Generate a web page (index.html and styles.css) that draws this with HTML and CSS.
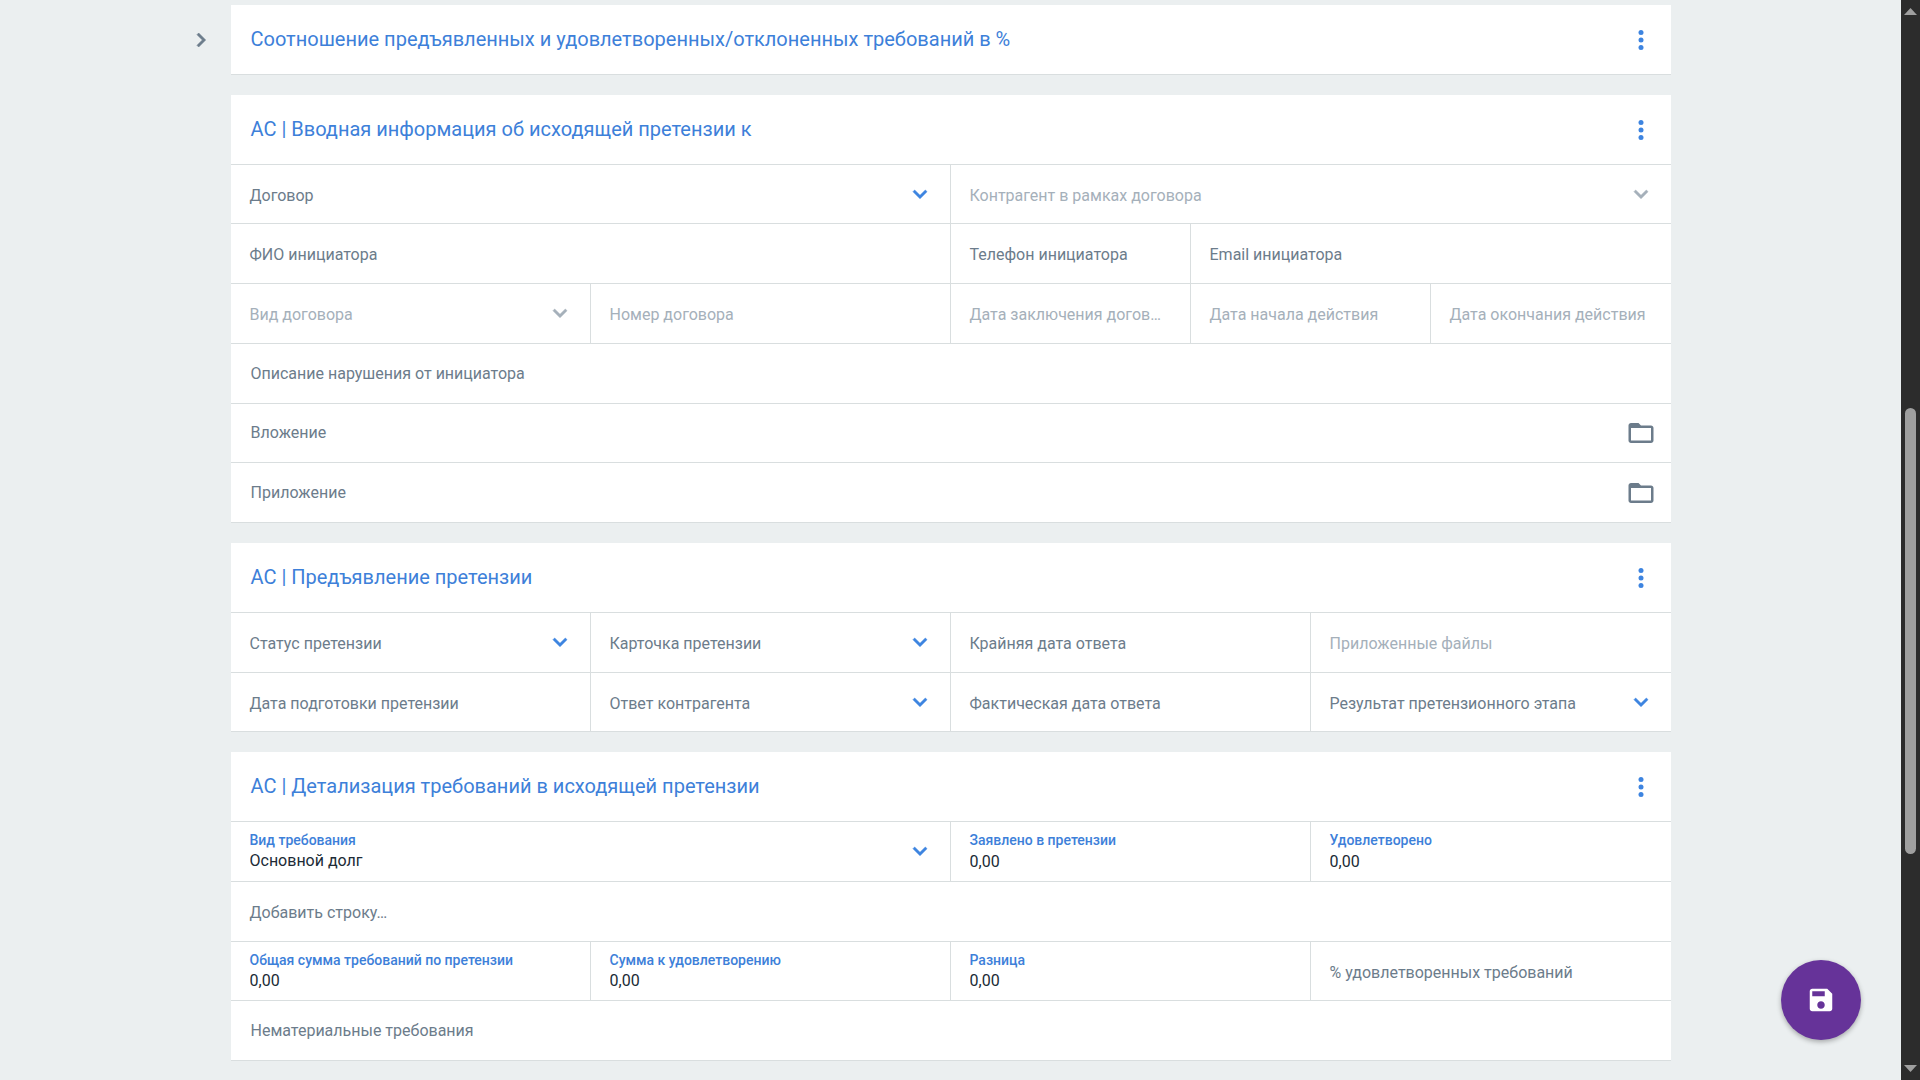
FILE: index.html
```html
<!DOCTYPE html>
<html lang="ru">
<head>
    <meta charset="UTF-8">
    <meta name="viewport" content="width=device-width, initial-scale=1.0">
    <title>Исходящая претензия</title>
    <link rel="stylesheet" href="styles.css">
</head>
<body>
    <svg class="sprite" aria-hidden="true">
        <symbol id="dots" viewBox="0 0 24 24"><circle cx="12" cy="6" r="2"/><circle cx="12" cy="12" r="2"/><circle cx="12" cy="18" r="2"/></symbol>
        <symbol id="chevron" viewBox="0 0 24 24"><path d="M16.59 8.59L12 13.17 7.41 8.59 6 10l6 6 6-6z"/></symbol>
        <symbol id="chevron-right" viewBox="0 0 24 24"><path d="M10 6L8.59 7.41 13.17 12l-4.58 4.59L10 18l6-6z"/></symbol>
        <symbol id="folder" viewBox="0 0 24 24"><path d="M20 6h-8l-2-2H4c-1.1 0-2 .9-2 2v12c0 1.1.9 2 2 2h16c1.1 0 2-.9 2-2V8c0-1.1-.9-2-2-2zm0 12H4V8h16v10z"/></symbol>
        <symbol id="save" viewBox="0 0 24 24"><path d="M17 3H5c-1.11 0-2 .9-2 2v14c0 1.1.89 2 2 2h14c1.1 0 2-.9 2-2V7l-4-4zm-5 16c-1.66 0-3-1.34-3-3s1.34-3 3-3 3 1.34 3 3-1.34 3-3 3zm3-10H5V5h10v4z"/></symbol>
    </svg>

    <div class="page">
        <button class="icon-button side-toggle" type="button" aria-label="Открыть панель"><svg class="icon"><use href="#chevron-right"/></svg></button>

        <main class="content">
            <section class="card">
                <header class="card-header">
                    <h2>Соотношение предъявленных и удовлетворенных/отклоненных требований в %</h2>
                    <button class="icon-button menu" type="button" aria-label="Меню"><svg class="icon icon-large"><use href="#dots"/></svg></button>
                </header>
            </section>

            <section class="card">
                <header class="card-header">
                    <h2>АС | Вводная информация об исходящей претензии к</h2>
                    <button class="icon-button menu" type="button" aria-label="Меню"><svg class="icon icon-large"><use href="#dots"/></svg></button>
                </header>
                <div class="row row-short">
                    <div class="field half">
                        <label for="contract">Договор</label>
                        <select id="contract"><option value=""></option></select>
                        <svg class="icon arrow"><use href="#chevron"/></svg>
                    </div>
                    <div class="field half disabled">
                        <label for="partner">Контрагент в рамках договора</label>
                        <select id="partner" disabled><option value=""></option></select>
                        <svg class="icon arrow"><use href="#chevron"/></svg>
                    </div>
                </div>
                <div class="row">
                    <div class="field half">
                        <label for="fio">ФИО инициатора</label>
                        <input id="fio" type="text">
                    </div>
                    <div class="field sixth">
                        <label for="phone">Телефон инициатора</label>
                        <input id="phone" type="tel">
                    </div>
                    <div class="field third">
                        <label for="email">Email инициатора</label>
                        <input id="email" type="email">
                    </div>
                </div>
                <div class="row">
                    <div class="field quarter disabled">
                        <label for="contract-type">Вид договора</label>
                        <select id="contract-type" disabled><option value=""></option></select>
                        <svg class="icon arrow"><use href="#chevron"/></svg>
                    </div>
                    <div class="field quarter disabled">
                        <label for="contract-number">Номер договора</label>
                        <input id="contract-number" type="text" disabled>
                    </div>
                    <div class="field sixth disabled">
                        <label for="date-signed">Дата заключения договора</label>
                        <input id="date-signed" type="text" disabled>
                    </div>
                    <div class="field sixth disabled">
                        <label for="date-start">Дата начала действия</label>
                        <input id="date-start" type="text" disabled>
                    </div>
                    <div class="field sixth disabled">
                        <label for="date-end">Дата окончания действия</label>
                        <input id="date-end" type="text" disabled>
                    </div>
                </div>
                <div class="row">
                    <div class="field full">
                        <label for="description">Описание нарушения от инициатора</label>
                        <input id="description" type="text">
                    </div>
                </div>
                <div class="row row-short">
                    <div class="files">
                        <span>Вложение</span>
                        <button class="icon-button" type="button" aria-label="Выбрать вложение"><svg class="icon icon-large"><use href="#folder"/></svg></button>
                    </div>
                </div>
                <div class="row">
                    <div class="files">
                        <span>Приложение</span>
                        <button class="icon-button" type="button" aria-label="Выбрать приложение"><svg class="icon icon-large"><use href="#folder"/></svg></button>
                    </div>
                </div>
            </section>

            <section class="card">
                <header class="card-header">
                    <h2>АС | Предъявление претензии</h2>
                    <button class="icon-button menu" type="button" aria-label="Меню"><svg class="icon icon-large"><use href="#dots"/></svg></button>
                </header>
                <div class="row">
                    <div class="field quarter">
                        <label for="status">Статус претензии</label>
                        <select id="status"><option value=""></option></select>
                        <svg class="icon arrow"><use href="#chevron"/></svg>
                    </div>
                    <div class="field quarter">
                        <label for="claim-card">Карточка претензии</label>
                        <select id="claim-card"><option value=""></option></select>
                        <svg class="icon arrow"><use href="#chevron"/></svg>
                    </div>
                    <div class="field quarter">
                        <label for="deadline">Крайняя дата ответа</label>
                        <input id="deadline" type="text">
                    </div>
                    <div class="field quarter disabled">
                        <label for="attached">Приложенные файлы</label>
                        <input id="attached" type="text" disabled>
                    </div>
                </div>
                <div class="row row-short">
                    <div class="field quarter">
                        <label for="date-prepared">Дата подготовки претензии</label>
                        <input id="date-prepared" type="text">
                    </div>
                    <div class="field quarter">
                        <label for="answer">Ответ контрагента</label>
                        <select id="answer"><option value=""></option></select>
                        <svg class="icon arrow"><use href="#chevron"/></svg>
                    </div>
                    <div class="field quarter">
                        <label for="date-answer">Фактическая дата ответа</label>
                        <input id="date-answer" type="text">
                    </div>
                    <div class="field quarter">
                        <label for="result">Результат претензионного этапа</label>
                        <select id="result"><option value=""></option></select>
                        <svg class="icon arrow"><use href="#chevron"/></svg>
                    </div>
                </div>
            </section>

            <section class="card">
                <header class="card-header">
                    <h2>АС | Детализация требований в исходящей претензии</h2>
                    <button class="icon-button menu" type="button" aria-label="Меню"><svg class="icon icon-large"><use href="#dots"/></svg></button>
                </header>
                <div class="row">
                    <div class="field half filled">
                        <label for="demand-type">Вид требования</label>
                        <select id="demand-type"><option>Основной долг</option></select>
                        <svg class="icon arrow"><use href="#chevron"/></svg>
                    </div>
                    <div class="field quarter filled">
                        <label for="claimed">Заявлено в претензии</label>
                        <input id="claimed" type="text" value="0,00">
                    </div>
                    <div class="field quarter filled">
                        <label for="satisfied">Удовлетворено</label>
                        <input id="satisfied" type="text" value="0,00">
                    </div>
                </div>
                <div class="row">
                    <button class="add-row" type="button">Добавить строку…</button>
                </div>
                <div class="row row-short">
                    <div class="field quarter filled">
                        <label for="total">Общая сумма требований по претензии</label>
                        <input id="total" type="text" value="0,00">
                    </div>
                    <div class="field quarter filled">
                        <label for="to-satisfy">Сумма к удовлетворению</label>
                        <input id="to-satisfy" type="text" value="0,00">
                    </div>
                    <div class="field quarter filled">
                        <label for="difference">Разница</label>
                        <input id="difference" type="text" value="0,00">
                    </div>
                    <div class="field quarter">
                        <label for="percent">% удовлетворенных требований</label>
                        <input id="percent" type="text">
                    </div>
                </div>
                <div class="row">
                    <div class="field full">
                        <label for="intangible">Нематериальные требования</label>
                        <input id="intangible" type="text">
                    </div>
                </div>
            </section>
        </main>
    </div>

    <button class="save-button" type="button" aria-label="Сохранить"><svg class="icon icon-large"><use href="#save"/></svg></button>

    <div class="scrollbar" aria-hidden="true">
        <svg class="scroll-arrow" viewBox="0 0 13 7"><path d="M6.5 0L13 7H0z"/></svg>
        <div class="track">
            <div class="track-before"></div>
            <div class="thumb"></div>
            <div class="track-after"></div>
        </div>
        <svg class="scroll-arrow" viewBox="0 0 13 7"><path d="M0 0h13L6.5 7z"/></svg>
    </div>
</body>
</html>
```
FILE: styles.css
```css
* {
    box-sizing: border-box;
}

body {
    font-family: Roboto, "Liberation Sans", sans-serif;
    font-size: 16px;
    line-height: 20px;
    margin: 0;
    background-color: #ebeff0;
    color: #6c7c8b;
    overflow: hidden;
}

.sprite {
    display: none;
}

.page {
    display: grid;
    grid-template-columns: 1fr minmax(0, 1440px) 1fr;
    align-items: start;
    padding: 5px 19px 19px 0;
}

.content {
    display: flex;
    flex-direction: column;
    gap: 20px;
}

.icon {
    display: block;
    width: 28px;
    height: 28px;
    fill: currentColor;
}

.icon-large {
    width: 30px;
    height: 30px;
}

.icon-button {
    border: none;
    padding: 0;
    background: none;
    color: inherit;
    cursor: pointer;
}

.side-toggle {
    justify-self: end;
    margin: 21px 16px 0 0;
}

.side-toggle .icon,
.arrow {
    stroke: currentColor;
    stroke-width: 0.5;
}

/* Карточки */
.card {
    background-color: white;
}

.card-header {
    display: flex;
    align-items: center;
    justify-content: space-between;
    height: 70px;
    padding: 0 15px 0 20px;
    border-bottom: 1px solid #d9dedf;
}

.card-header h2 {
    margin: 0;
    padding-bottom: 2px;
    font-size: 20px;
    font-weight: 400;
    line-height: 28px;
    color: #3d80d9;
}

.menu {
    color: #3d84e0;
}

.row {
    display: grid;
    grid-template-columns: repeat(12, minmax(0, 1fr));
    height: 60px;
    border-bottom: 1px solid #d9dedf;
}

.row-short {
    height: 59px;
}

/* Поля: подпись лежит в той же ячейке, что и ввод */
.field {
    display: grid;
    grid-template-columns: minmax(0, 1fr);
    grid-template-rows: minmax(0, 1fr);
    align-items: center;
    border-right: 1px solid #d9dedf;
}

.field:last-child {
    border-right: none;
}

.full {
    grid-column: span 12;
}

.half {
    grid-column: span 6;
}

.third {
    grid-column: span 4;
}

.quarter {
    grid-column: span 3;
}

.sixth {
    grid-column: span 2;
}

.field label,
.field input,
.field select,
.field .arrow {
    grid-area: 1 / 1;
}

.field label {
    padding: 3px 19px 0;
    overflow: hidden;
    text-overflow: ellipsis;
    white-space: nowrap;
    pointer-events: none;
}

.field.sixth label {
    padding-right: 24px;
}

.field.sixth:last-child label {
    padding-right: 19px;
}

.field.full label {
    padding: 0 20px;
}

.field input,
.field select {
    width: 100%;
    height: 100%;
    margin: 0;
    border: none;
    border-radius: 0;
    outline: none;
    padding: 29px 19px 10px;
    background: none;
    color: #202b36;
    font: inherit;
    line-height: 20px;
    appearance: none;
}

.field .arrow {
    justify-self: end;
    margin: 0 16px 2px 0;
    color: #3d84e0;
    pointer-events: none;
}

.field.disabled label,
.field.disabled .arrow {
    color: #a5b0ba;
}

.field.filled label {
    align-self: start;
    padding-top: 8px;
    font-size: 14px;
    font-weight: 500;
    color: #3d80d9;
}

.files {
    grid-column: span 12;
    display: flex;
    align-items: center;
    justify-content: space-between;
    padding: 0 15px 0 20px;
}

.add-row {
    grid-column: span 12;
    border: none;
    padding: 2px 19px 0;
    background: none;
    color: inherit;
    font: inherit;
    text-align: left;
    cursor: pointer;
}

.save-button {
    position: fixed;
    right: 59px;
    bottom: 40px;
    display: grid;
    place-items: center;
    width: 80px;
    height: 80px;
    border: none;
    border-radius: 50%;
    padding: 0;
    background-color: #663399;
    color: white;
    box-shadow: 0 2px 5px rgba(0, 0, 0, 0.3);
    cursor: pointer;
}

/* Полоса прокрутки */
.scrollbar {
    position: fixed;
    top: 0;
    right: 0;
    bottom: 0;
    display: flex;
    flex-direction: column;
    align-items: center;
    width: 19px;
    padding: 8px 0;
    background-color: #2c2c2c;
}

.scroll-arrow {
    width: 13px;
    height: 7px;
    fill: #9f9f9f;
}

.track {
    flex: 1;
    display: flex;
    flex-direction: column;
    width: 11px;
}

.track-before {
    flex: 393;
}

.thumb {
    flex: 446;
    border-radius: 6px;
    background-color: #9f9f9f;
}

.track-after {
    flex: 211;
}
```
